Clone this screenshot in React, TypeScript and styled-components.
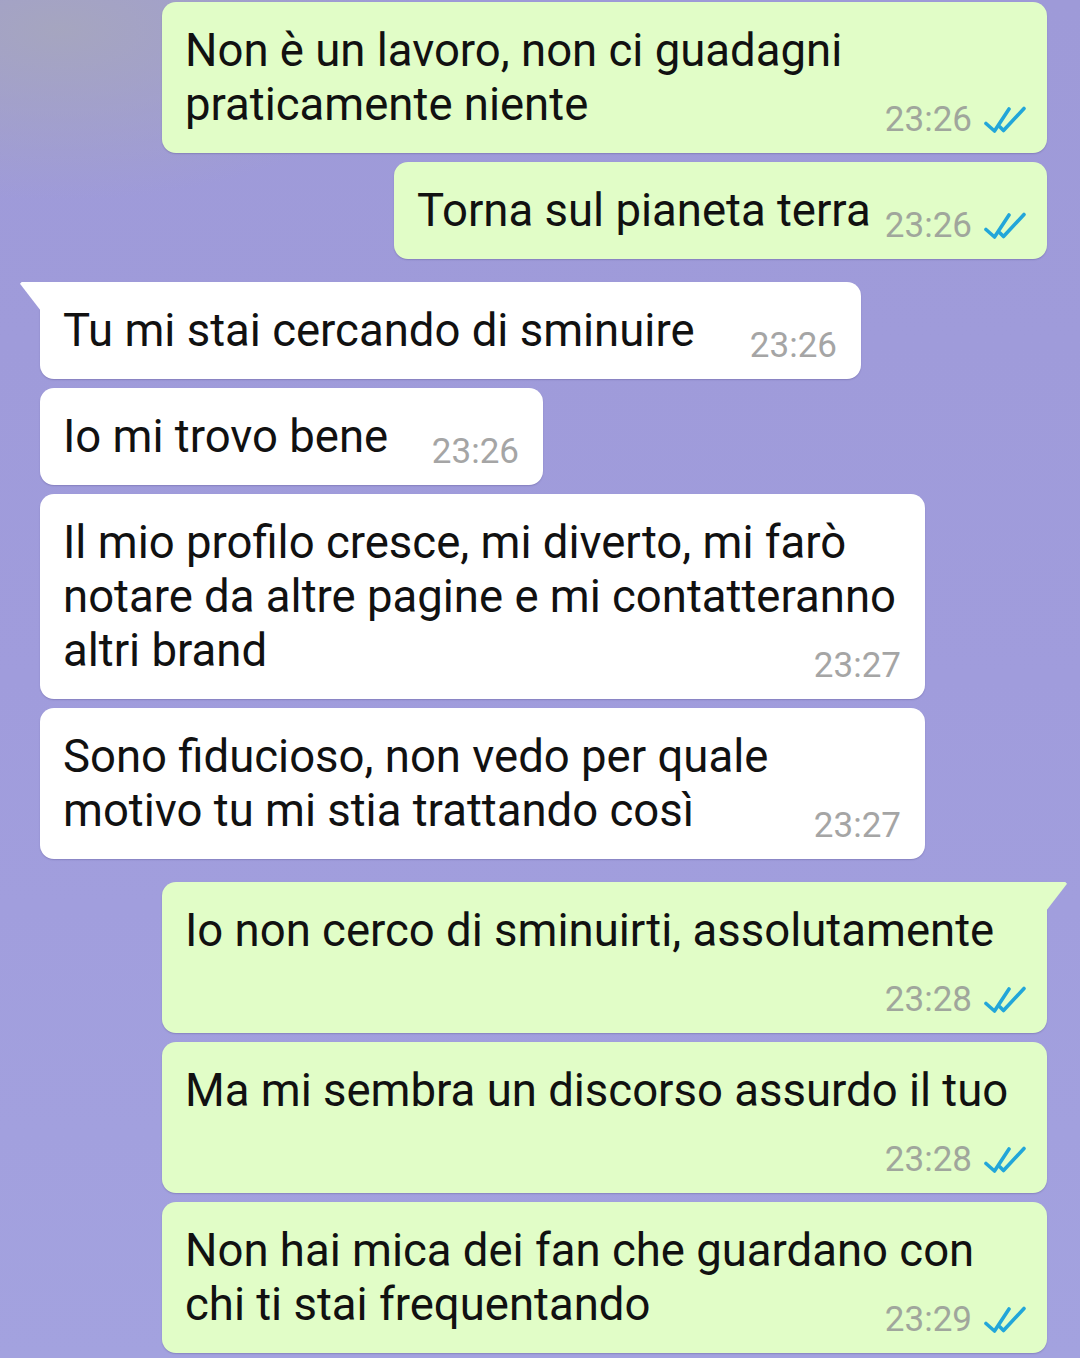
import React from 'react'
import styled, { createGlobalStyle, css } from 'styled-components'

const GlobalStyle = createGlobalStyle`
  html, body {
    margin: 0;
    padding: 0;
  }
  body {
    font-family: Roboto, 'Noto Sans', sans-serif;
    -webkit-font-smoothing: antialiased;
  }
`

const Page = styled.div`
  width: 1080px;
  height: 1358px;
  overflow: hidden;
  box-sizing: border-box;
  padding-top: 2px;
  background:
    radial-gradient(ellipse 360px 170px at 60px 30px, rgba(166, 166, 190, 0.95), rgba(166, 166, 190, 0) 100%),
    linear-gradient(180deg, #9e9ad8 0%, #a09cdc 50%, #a3a2df 100%);
  display: flex;
  flex-direction: column;
  gap: 9px;
`

const Row = styled.div<{ $out: boolean; $first?: boolean }>`
  display: flex;
  justify-content: ${(p) => (p.$out ? 'flex-end' : 'flex-start')};
  padding: ${(p) => (p.$out ? '0 33px 0 0' : '0 0 0 40px')};
  margin-top: ${(p) => (p.$first ? '14px' : '0')};
`

const Bubble = styled.div<{ $out: boolean; $tail?: boolean }>`
  position: relative;
  box-sizing: border-box;
  max-width: 885px;
  padding: ${(p) => (p.$out ? '22px 20px 21px 23px' : '22px 22px 21px 23px')};
  border-radius: 14px;
  background: ${(p) => (p.$out ? '#e1fdc7' : '#ffffff')};
  box-shadow: 0 1px 1.5px rgba(40, 30, 90, 0.22);

  ${(p) =>
    p.$tail &&
    css`
      ${p.$out ? 'border-top-right-radius: 0;' : 'border-top-left-radius: 0;'}
      &::before {
        content: '';
        position: absolute;
        top: 0;
        ${p.$out ? 'right: -20px;' : 'left: -20px;'}
        width: 21px;
        height: 29px;
        background: inherit;
        clip-path: ${p.$out
          ? 'polygon(0 0, 92% 0, 100% 6%, 0 100%)'
          : 'polygon(8% 0, 100% 0, 100% 100%, 0 6%)'};
      }
    `}
`

const Text = styled.div`
  display: flow-root;
  font-size: 45.5px;
  line-height: 54px;
  color: #111111;
  white-space: pre-wrap;
`

const Meta = styled.span<{ $out: boolean; $gap: number }>`
  float: right;
  display: inline-flex;
  align-items: center;
  gap: 12px;
  height: 54px;
  margin-left: ${(p) => p.$gap}px;
  margin-right: ${(p) => (p.$out ? 1 : 2)}px;
  position: relative;
  top: 15px;
  font-size: 35px;
  line-height: 54px;
  color: ${(p) => (p.$out ? '#a0a69c' : '#a5a5a5')};
`

const Ticks = () => (
  <svg width='42' height='28' viewBox='0 0 42 28' fill='none'>
    <path
      d='M2 17.5 L10.5 25 L25 3'
      stroke='#22a6d9'
      strokeWidth='3.6'
      strokeLinecap='round'
      strokeLinejoin='round'
    />
    <path
      d='M16 21 L19.5 24.5 L40 2.5'
      stroke='#22a6d9'
      strokeWidth='3.6'
      strokeLinecap='round'
      strokeLinejoin='round'
    />
  </svg>
)

type Msg = {
  text: string
  time: string
  out: boolean
  width?: number
  tail?: boolean
  first?: boolean
  gap?: number
}

const messages: Msg[] = [
  { text: 'Non è un lavoro, non ci guadagni praticamente niente', time: '23:26', out: true, width: 885 },
  { text: 'Torna sul pianeta terra', time: '23:26', out: true, width: 653, gap: 10 },
  { text: 'Tu mi stai cercando di sminuire', time: '23:26', out: false, width: 821, tail: true, first: true, gap: 40 },
  { text: 'Io mi trovo bene', time: '23:26', out: false, width: 503, gap: 30 },
  {
    text: 'Il mio profilo cresce, mi diverto, mi farò notare da altre pagine e mi contatteranno altri brand',
    time: '23:27',
    out: false,
    width: 885
  },
  {
    text: 'Sono fiducioso, non vedo per quale motivo tu mi stia trattando così',
    time: '23:27',
    out: false,
    width: 885
  },
  { text: 'Io non cerco di sminuirti, assolutamente', time: '23:28', out: true, width: 885, tail: true, first: true },
  { text: 'Ma mi sembra un discorso assurdo il tuo', time: '23:28', out: true, width: 885 },
  { text: 'Non hai mica dei fan che guardano con chi ti stai frequentando', time: '23:29', out: true, width: 885 }
]

export default function App() {
  return (
    <>
      <GlobalStyle />
      <Page>
        {messages.map((m, i) => (
          <Row key={i} $out={m.out} $first={m.first}>
            <Bubble $out={m.out} $tail={m.tail} style={m.width ? { width: m.width } : undefined}>
              <Text>
                {m.text}
                <Meta $out={m.out} $gap={m.gap ?? 20}>
                  <span>{m.time}</span>
                  {m.out && <Ticks />}
                </Meta>
              </Text>
            </Bubble>
          </Row>
        ))}
      </Page>
    </>
  )
}
